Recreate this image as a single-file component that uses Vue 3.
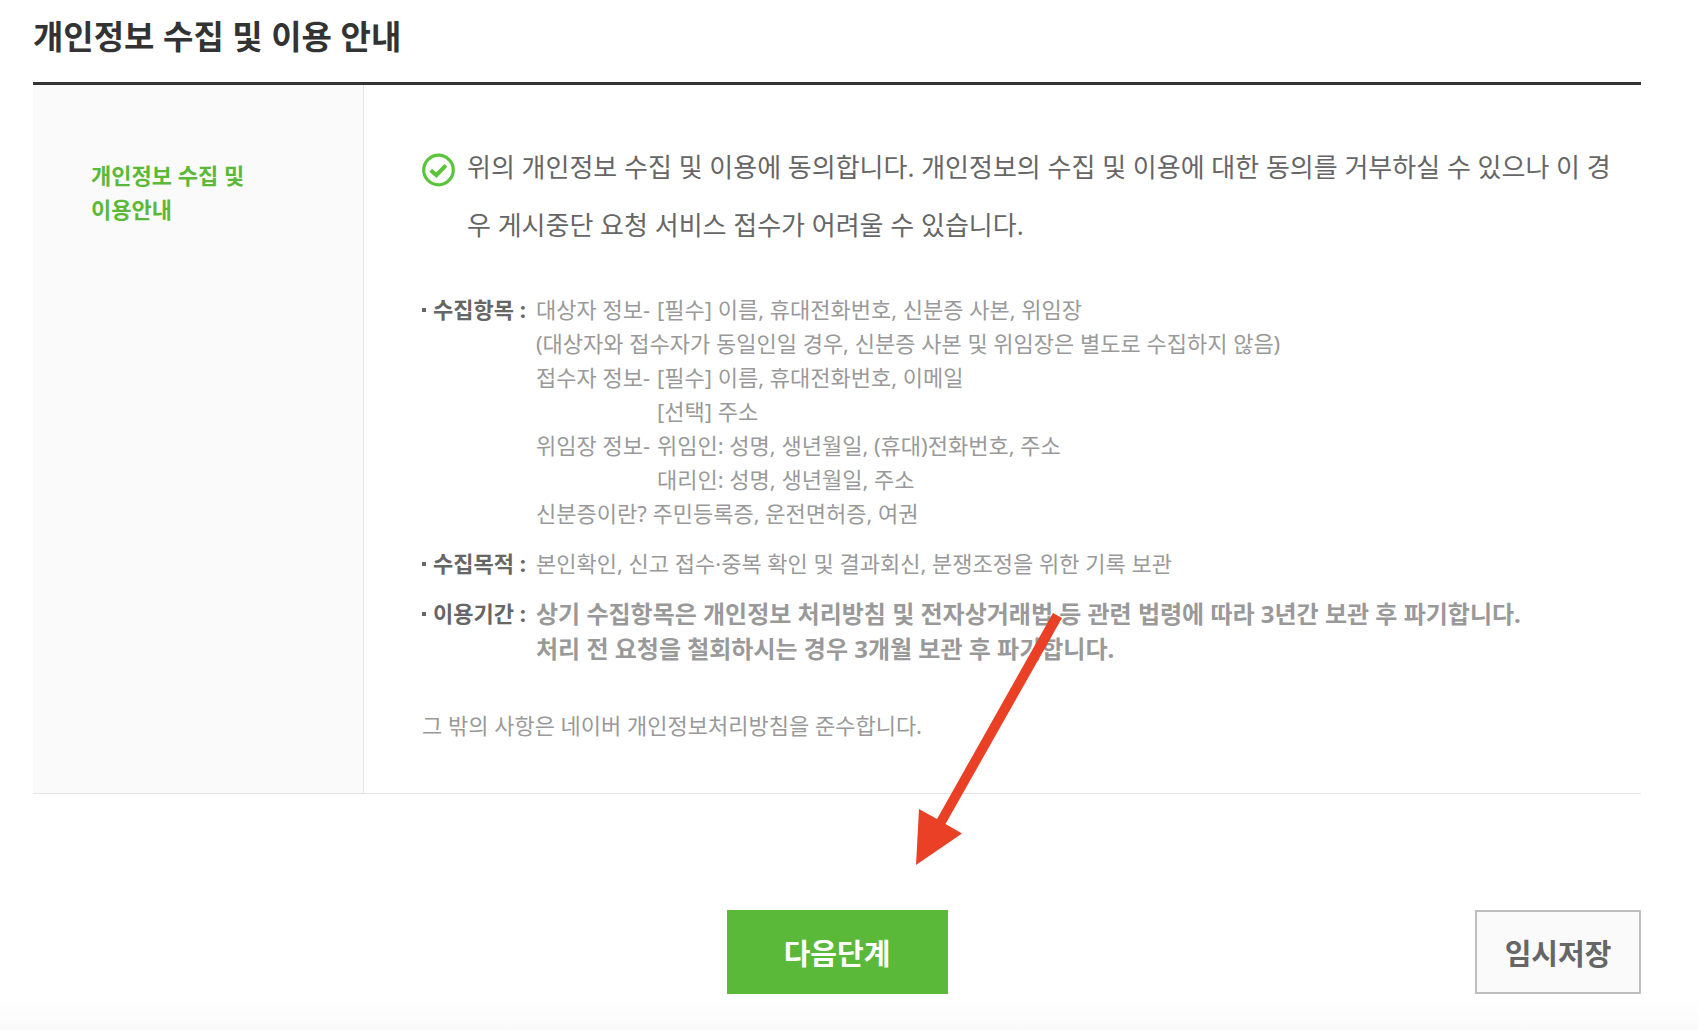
<script setup>
const items = [
  {
    label: '수집항목',
    rows: [
      { head: '대상자 정보-', text: '[필수] 이름, 휴대전화번호, 신분증 사본, 위임장' },
      { text: '(대상자와 접수자가 동일인일 경우, 신분증 사본 및 위임장은 별도로 수집하지 않음)' },
      { head: '접수자 정보-', text: '[필수] 이름, 휴대전화번호, 이메일' },
      { head: '', text: '[선택] 주소' },
      { head: '위임장 정보-', text: '위임인: 성명, 생년월일, (휴대)전화번호, 주소' },
      { head: '', text: '대리인: 성명, 생년월일, 주소' },
      { text: '신분증이란? 주민등록증, 운전면허증, 여권' },
    ],
  },
  {
    label: '수집목적',
    rows: [{ text: '본인확인, 신고 접수·중복 확인 및 결과회신, 분쟁조정을 위한 기록 보관' }],
  },
  {
    label: '이용기간',
    strong: true,
    rows: [
      { text: '상기 수집항목은 개인정보 처리방침 및 전자상거래법 등 관련 법령에 따라 3년간 보관 후 파기합니다.' },
      { text: '처리 전 요청을 철회하시는 경우 3개월 보관 후 파기합니다.' },
    ],
  },
]
</script>

<template>
  <main class="page">
    <h1 class="title">개인정보 수집 및 이용 안내</h1>

    <table class="sheet">
      <tbody>
        <tr>
          <th scope="row">개인정보 수집 및<br />이용안내</th>
          <td>
            <div class="agree">
              <svg class="check" viewBox="0 0 34 34" fill="none" stroke="#5ac53a" aria-hidden="true">
                <circle cx="16.500" cy="17" r="14.800" stroke-width="3.200" />
                <path d="M8.700 17.200l5.600 5 9.600-9.800" stroke-width="4" />
              </svg>
              <p>위의 개인정보 수집 및 이용에 동의합니다. 개인정보의 수집 및 이용에 대한 동의를 거부하실 수 있으나 이 경우 게시중단 요청 서비스 접수가 어려울 수 있습니다.</p>
            </div>

            <dl class="items">
              <div v-for="item in items" :key="item.label" class="item">
                <dt>{{ item.label }} :</dt>
                <dd :class="{ strong: item.strong }">
                  <div v-for="row in item.rows" :key="row.text" class="row">
                    <span v-if="row.head !== undefined" class="head">{{ row.head }}</span>
                    <span>{{ row.text }}</span>
                  </div>
                </dd>
              </div>
            </dl>

            <p class="note">그 밖의 사항은 네이버 개인정보처리방침을 준수합니다.</p>
          </td>
        </tr>
      </tbody>
    </table>

    <div class="actions">
      <button type="button" class="btn next">다음단계</button>
      <button type="button" class="btn save">임시저장</button>
    </div>

    <svg class="arrow" viewBox="0 0 146 252" aria-hidden="true">
      <path d="M137 0l9 5L29.500 211 46 220.500 0 252 3 196l18 10z" fill="#ea4025" />
    </svg>
  </main>
</template>

<style>
body {
  margin: 0;
  background: #fff;
}
</style>

<style scoped>
.page {
  position: relative;
  box-sizing: border-box;
  min-height: 100vh;
  padding: 13px 57px 34px 33px;
  background: linear-gradient(to top, #fafafa, #fff 32px);
  color: #666;
  font-family: "Noto Sans", "Noto Sans CJK KR", sans-serif;
  font-size: 22px;
  line-height: 34px;
}

.title {
  margin: 0 0 21px;
  color: #333;
  font-size: 33px;
  line-height: 48px;
  font-weight: 700;
}

.sheet {
  width: 100%;
  border-collapse: separate;
  border-spacing: 0;
  border-top: 3px solid #333;
  border-bottom: 1px solid #e5e5e5;
}

th,
td {
  text-align: left;
  vertical-align: top;
}

th {
  box-sizing: border-box;
  width: 331px;
  padding: 73px 58px 50px;
  border-right: 1px solid #e5e5e5;
  background: #fafafa;
  color: #5ab938;
  font-weight: 700;
}

td {
  padding: 53px 28px 51px 58px;
}

.agree {
  display: flex;
  gap: 11px;
}

.check {
  flex: none;
  width: 34px;
  height: 34px;
  margin-top: 15px;
}

.agree p {
  margin: 0;
  font-size: 26px;
  line-height: 58px;
}

.items {
  display: grid;
  gap: 16px;
  margin: 38px 0 42px;
}

.item {
  display: flex;
}

dt {
  box-sizing: border-box;
  position: relative;
  flex: none;
  width: 114px;
  padding-left: 11px;
  font-weight: 700;
}

dt::before {
  content: "";
  position: absolute;
  left: 0;
  top: 16px;
  width: 4px;
  height: 4px;
  background: #666;
}

dd {
  margin: 0;
  color: #999;
}

.strong {
  font-size: 24px;
  line-height: 35px;
  font-weight: 700;
}

.row {
  display: flex;
}

.head {
  flex: none;
  width: 121px;
}

.note {
  margin: 0;
  color: #999;
}

.actions {
  display: grid;
  grid-template-columns: 1fr auto 1fr;
  margin-top: 116px;
}

.btn {
  box-sizing: border-box;
  height: 84px;
  padding: 0;
  font-family: inherit;
  font-size: 29px;
  font-weight: 700;
  cursor: pointer;
}

.next {
  grid-column: 2;
  width: 221px;
  border: 0;
  background: #5ab938;
  color: #fff;
}

.save {
  justify-self: end;
  width: 166px;
  border: 2px solid #bebebe;
  background: #fafafa;
  color: #666;
}

.arrow {
  position: absolute;
  left: calc(50% + 67px);
  top: 613px;
  width: 146px;
  height: 252px;
  pointer-events: none;
}
</style>
